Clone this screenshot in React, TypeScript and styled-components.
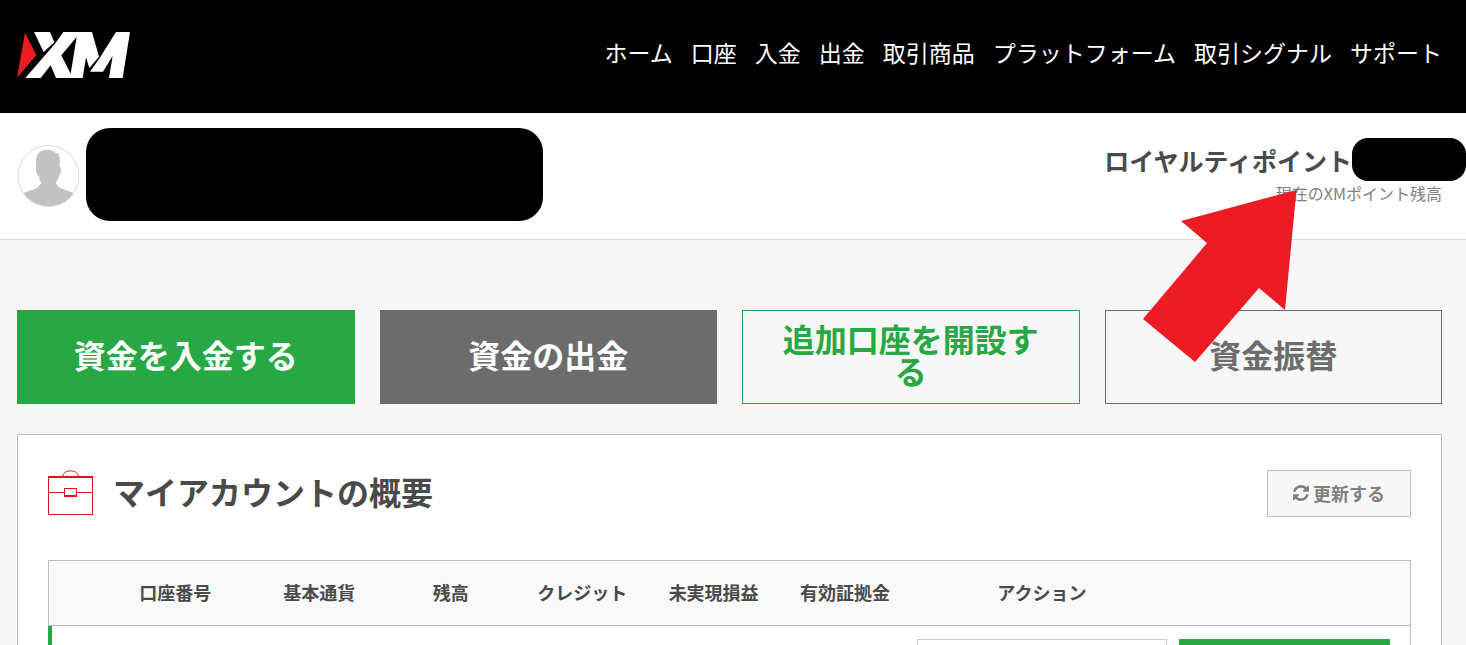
import React from "react";
import styled, { createGlobalStyle } from "styled-components";

const GREEN = "#28a745";
const GREY = "#6c6c6c";
const INK = "#4a4a4a";
const LINE = "#bdbdbd";

const GlobalStyle = createGlobalStyle`
  *, *::before, *::after { box-sizing: border-box; }
  body {
    margin: 0;
    background: #f7f7f7;
    color: ${INK};
    font-family: "Noto Sans CJK JP", sans-serif;
  }
  button, select { font-family: inherit; }
`;

const Page = styled.div`
  height: 100vh;
  overflow: hidden;
`;

const Header = styled.header`
  display: flex;
  align-items: center;
  justify-content: space-between;
  height: 113px;
  padding: 0 24px 4px 17px;
  background: #000;
`;

const LogoLink = styled.a`
  display: block;
  line-height: 0;
`;

const Nav = styled.nav`
  display: flex;
  gap: 18px;
  padding-bottom: 6px;
`;

const NavLink = styled.a`
  color: #fff;
  font-size: 23px;
  line-height: 32px;
  text-decoration: none;
  white-space: nowrap;
`;

const ProfileBar = styled.section`
  display: flex;
  justify-content: space-between;
  align-items: flex-start;
  height: 127px;
  padding: 15px 0 0 17px;
  background: #fff;
  border-bottom: 1px solid #dcdcdc;
`;

const Identity = styled.div`
  display: flex;
  align-items: flex-start;
  gap: 6px;
`;

const AvatarFrame = styled.div`
  padding-top: 17px;
  line-height: 0;
`;

const Mask = styled.div<{ $w: number; $h: number; $r: number }>`
  flex: none;
  width: ${(p) => p.$w}px;
  height: ${(p) => p.$h}px;
  border-radius: ${(p) => p.$r}px;
  background: #000;
`;

const Loyalty = styled.div`
  position: relative;
  padding-top: 10px;
`;

const LoyaltyTitle = styled.div`
  display: flex;
  align-items: center;
  justify-content: flex-end;
  height: 43px;
  font-size: 25px;
  line-height: 32px;
  font-weight: 700;
  white-space: nowrap;
`;

const LoyaltyNote = styled.div`
  padding: 2px 24px 0 0;
  color: #808080;
  font-size: 16px;
  line-height: 20px;
  text-align: right;
`;

const Arrow = styled.svg`
  position: absolute;
  z-index: 2;
  top: 62px;
  right: 169px;
`;

const Main = styled.main`
  padding: 70px 24px 0 17px;
`;

const Actions = styled.div`
  display: grid;
  grid-template-columns: repeat(4, 1fr);
  gap: 25px;
`;

type Tone = "green" | "grey" | "greenOutline" | "greyOutline";
const tones: Record<Tone, string> = {
  green: `background: ${GREEN}; border-color: ${GREEN}; color: #fff;`,
  grey: `background: ${GREY}; border-color: ${GREY}; color: #fff;`,
  greenOutline: `background: transparent; border-color: ${GREEN}; color: ${GREEN};`,
  greyOutline: `background: transparent; border-color: ${GREY}; color: ${GREY};`,
};

const ActionButton = styled.button<{ $tone: Tone }>`
  height: 94px;
  padding: 0 32px 6px;
  border: 1px solid;
  font-size: 32px;
  line-height: 32px;
  font-weight: 700;
  ${(p) => tones[p.$tone]}
`;

const Panel = styled.section`
  margin-top: 30px;
  padding: 35px 30px 30px;
  background: #fff;
  border: 1px solid ${LINE};
`;

const PanelHead = styled.div`
  display: flex;
  align-items: flex-start;
  height: 47px;
  margin-bottom: 43px;
`;

const PanelTitle = styled.h2`
  flex: 1;
  margin: 0 0 0 20px;
  font-size: 32px;
  line-height: 43px;
  font-weight: 700;
`;

const RefreshButton = styled.button`
  display: flex;
  align-items: center;
  justify-content: center;
  gap: 4px;
  width: 144px;
  height: 47px;
  padding: 0 0 2px;
  background: #f7f7f7;
  border: 1px solid ${LINE};
  color: #808080;
  font-size: 18px;
  line-height: 24px;
  font-weight: 700;
`;

const Accounts = styled.table`
  width: 100%;
  table-layout: fixed;
  border-collapse: separate;
  border-spacing: 0;
  border: 1px solid ${LINE};
  border-left: 0;
`;

const HeadCell = styled.th<{ $share?: number }>`
  width: ${(p) => (p.$share ? `${p.$share}%` : "auto")};
  height: 65px;
  padding: 0 0 2px;
  background: #f9f9f9;
  border-bottom: 1px solid ${LINE};
  font-size: 18px;
  line-height: 24px;
  font-weight: 700;
  text-align: center;
  white-space: nowrap;

  &:first-child { border-left: 1px solid ${LINE}; }
`;

const Cell = styled.td`
  height: 64px;
  padding: 13px 6px;
  vertical-align: top;

  &:first-child { border-left: 4px solid ${GREEN}; }
  &:last-child { padding-right: 20px; }
`;

const ActionSelect = styled.select`
  display: block;
  width: 100%;
  height: 38px;
  appearance: none;
  background: #fff;
  border: 1px solid #ccc;
  border-radius: 0;
`;

const GoButton = styled.button`
  display: block;
  width: 100%;
  height: 38px;
  background: ${GREEN};
  border: 0;
`;

const Logo = () => (
  <svg width="113" height="46" viewBox="51 96 339 138" aria-hidden="true">
    <path fill="#ed1c24" d="M75 98 109 165 51 233Z" />
    <path fill="#fff" d="M102 96H150L163 127 131 156Z" />
    <path
      fill="#fff"
      fillRule="evenodd"
      d="M190 96H276L297 170 268 204 258 172 248 234H168L152 196 122 234H76L165 131ZM230 111 184 166 212 221Z"
    />
    <path fill="#fff" d="M348 96H390L368 234H327L338 168 309 215H270L299 174Z" />
  </svg>
);

const Avatar = () => (
  <svg width="63" height="62" viewBox="51 435 189 186" aria-hidden="true">
    <defs>
      <clipPath id="avatar-circle">
        <circle cx="145.500" cy="528" r="92" />
      </clipPath>
    </defs>
    <circle cx="145.500" cy="528" r="91.500" fill="#fff" />
    <path
      clipPath="url(#avatar-circle)"
      fill="#c2c2c2"
      d="M109 497C106 465 115 449 145 449C155 449 162 453 166 458C178 458 181 468 179 499C185 506 183 522 177 528C175 538 172 544 168 545V551C172 553 172 558 177 562C190 569 208 574 221 580L240 621H51L69 580C82 574 104 569 113 562C118 557 120 552 125 549C119 544 118 537 117 529C108 523 106 507 109 497Z"
    />
    <circle cx="145.500" cy="528" r="91.500" fill="none" stroke="#dcdcdc" strokeWidth="3" />
  </svg>
);

const Briefcase = () => (
  <svg width="45" height="45" viewBox="0 0 45 45" fill="none" stroke="#d8161d" aria-hidden="true">
    <path shapeRendering="crispEdges" d="M.5 6.500H44.500V44.500H.5ZM0 7.500H45M0 22.500H16M29 22.500H45" />
    <path shapeRendering="crispEdges" d="M16.500 18.500H28.500V26.500H16.500ZM16 25.500H29" />
    <path d="M14.500 6C16 2.500 18.500 .8 22.500 .8S29 2.500 30.500 6" />
  </svg>
);

const RefreshIcon = () => (
  <svg width="16" height="16" viewBox="0 0 1536 1536" fill="currentColor" aria-hidden="true">
    <path d="M1511 928q0 5-1 7-64 268-268 434.500t-478 166.500q-146 0-282.500-55t-243.500-157l-129 129q-19 19-45 19t-45-19-19-45v-448q0-26 19-45t45-19h448q26 0 45 19t19 45-19 45l-137 137q71 66 161 102t187 36q134 0 250-65t186-179q11-17 53-117 8-23 30-23h192q13 0 22.500 9.500t9.500 22.500zm25-800v448q0 26-19 45t-45 19h-448q-26 0-45-19t-19-45 19-45l138-138q-148-137-349-137-134 0-250 65t-186 179q-11 17-53 117-8 23-30 23h-199q-13 0-22.500-9.500t-9.500-22.500v-7q65-268 270-434.500t480-166.500q146 0 284 55.500t245 156.500l130-129q19-19 45-19t45 19 19 45z" />
  </svg>
);

const navItems = [
  "ホーム",
  "口座",
  "入金",
  "出金",
  "取引商品",
  "プラットフォーム",
  "取引シグナル",
  "サポート",
];

const actions: { label: string; tone: Tone }[] = [
  { label: "資金を入金する", tone: "green" },
  { label: "資金の出金", tone: "grey" },
  { label: "追加口座を開設する", tone: "greenOutline" },
  { label: "資金振替", tone: "greyOutline" },
];

const columns: { label: string; share?: number }[] = [
  { label: "", share: 3.6 },
  { label: "口座番号", share: 11.5 },
  { label: "基本通貨", share: 9.65 },
  { label: "残高", share: 9.65 },
  { label: "クレジット", share: 9.65 },
  { label: "未実現損益", share: 9.65 },
  { label: "有効証拠金", share: 9.65 },
  { label: "アクション", share: 19.25 },
  { label: "" },
];

export default function App() {
  return (
    <Page>
      <GlobalStyle />
      <Header>
        <LogoLink href="#" aria-label="XM">
          <Logo />
        </LogoLink>
        <Nav>
          {navItems.map((item) => (
            <NavLink key={item} href="#">
              {item}
            </NavLink>
          ))}
        </Nav>
      </Header>

      <ProfileBar>
        <Identity>
          <AvatarFrame>
            <Avatar />
          </AvatarFrame>
          <Mask $w={457} $h={93} $r={24} />
        </Identity>
        <Loyalty>
          <LoyaltyTitle>
            ロイヤルティポイント
            <Mask $w={114} $h={43} $r={16} />
          </LoyaltyTitle>
          <LoyaltyNote>現在のXMポイント残高</LoyaltyNote>
          <Arrow width="154" height="172" viewBox="0 0 154 172" aria-hidden="true">
            <path fill="#ed1c24" d="M153.500 0 142 120 116 98 52 172 0 129 64 53 38 31Z" />
          </Arrow>
        </Loyalty>
      </ProfileBar>

      <Main>
        <Actions>
          {actions.map((a) => (
            <ActionButton key={a.label} type="button" $tone={a.tone}>
              {a.label}
            </ActionButton>
          ))}
        </Actions>

        <Panel>
          <PanelHead>
            <Briefcase />
            <PanelTitle>マイアカウントの概要</PanelTitle>
            <RefreshButton type="button">
              <RefreshIcon />
              更新する
            </RefreshButton>
          </PanelHead>
          <Accounts>
            <thead>
              <tr>
                {columns.map((c, i) => (
                  <HeadCell key={i} scope="col" $share={c.share}>
                    {c.label}
                  </HeadCell>
                ))}
              </tr>
            </thead>
            <tbody>
              <tr>
                {columns.slice(0, 7).map((_, i) => (
                  <Cell key={i} />
                ))}
                <Cell>
                  <ActionSelect aria-label="アクション" />
                </Cell>
                <Cell>
                  <GoButton type="button" aria-label="アクション" />
                </Cell>
              </tr>
            </tbody>
          </Accounts>
        </Panel>
      </Main>
    </Page>
  );
}
